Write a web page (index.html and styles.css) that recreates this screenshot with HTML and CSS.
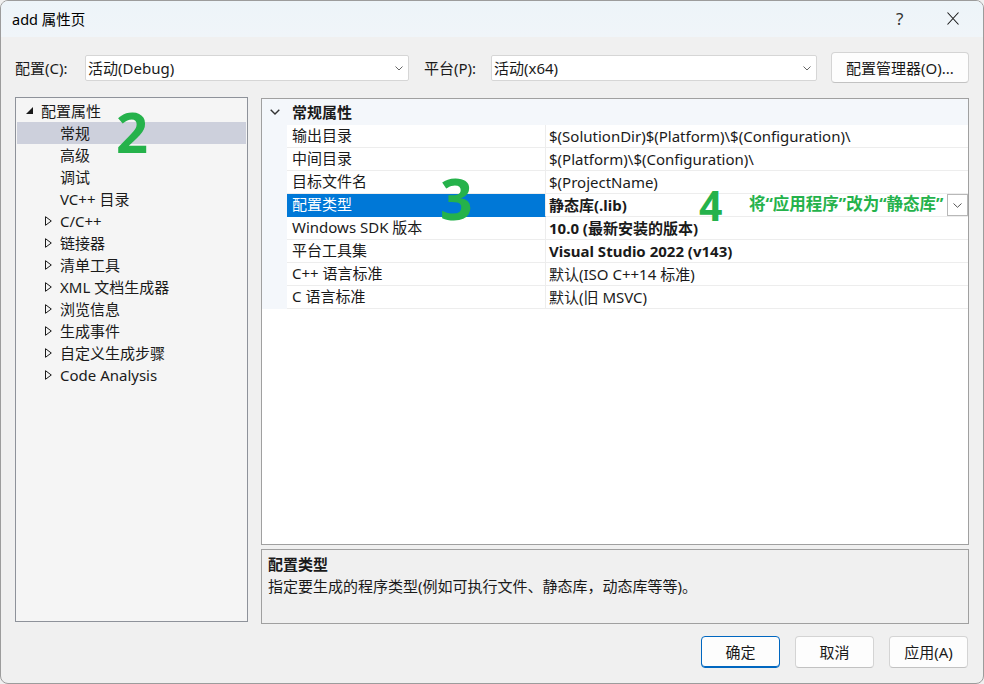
FILE: index.html
```html
<!DOCTYPE html>
<html lang="zh-CN">
<head>
    <meta charset="UTF-8">
    <meta name="viewport" content="width=device-width, initial-scale=1.0">
    <title>add 属性页</title>
    <link rel="stylesheet" href="styles.css">
</head>
<body>
    <div class="window">
        <div class="titlebar">
            <span class="title">add 属性页</span>
            <span class="help">?</span>
            <span class="close">
                <svg width="12" height="13" viewBox="0 0 12 13"><path d="M0.5 0.5L11.5 12.5M11.5 0.5L0.5 12.5" stroke="#1a1a1a" stroke-width="1.1" fill="none"/></svg>
            </span>
        </div>

        <div class="toolbar">
            <span class="field-label">配置(C):</span>
            <div class="combo combo-config">
                <span>活动(Debug)</span>
                <svg class="chev" width="8" height="5" viewBox="0 0 8 5"><path d="M0.5 0.5L4 4L7.5 0.5" stroke="#666" fill="none"/></svg>
            </div>
            <span class="field-label platform-label">平台(P):</span>
            <div class="combo combo-platform">
                <span>活动(x64)</span>
                <svg class="chev" width="8" height="5" viewBox="0 0 8 5"><path d="M0.5 0.5L4 4L7.5 0.5" stroke="#666" fill="none"/></svg>
            </div>
            <button class="btn manager">配置管理器(O)...</button>
        </div>

        <div class="main">
            <div class="tree">
                <div class="node root">
                    <span class="twisty"><svg width="7" height="7" viewBox="0 0 7 7"><path d="M7 0L7 7L0 7Z" fill="#1a1a1a"/></svg></span>
                    配置属性
                </div>
                <div class="node leaf selected">常规</div>
                <div class="node leaf">高级</div>
                <div class="node leaf">调试</div>
                <div class="node leaf">VC++ 目录</div>
                <div class="node folder"><span class="twisty"><svg width="7" height="10" viewBox="0 0 7 10"><path d="M0.5 0.7L6.3 5L0.5 9.3Z" stroke="#1a1a1a" fill="none"/></svg></span>C/C++</div>
                <div class="node folder"><span class="twisty"><svg width="7" height="10" viewBox="0 0 7 10"><path d="M0.5 0.7L6.3 5L0.5 9.3Z" stroke="#1a1a1a" fill="none"/></svg></span>链接器</div>
                <div class="node folder"><span class="twisty"><svg width="7" height="10" viewBox="0 0 7 10"><path d="M0.5 0.7L6.3 5L0.5 9.3Z" stroke="#1a1a1a" fill="none"/></svg></span>清单工具</div>
                <div class="node folder"><span class="twisty"><svg width="7" height="10" viewBox="0 0 7 10"><path d="M0.5 0.7L6.3 5L0.5 9.3Z" stroke="#1a1a1a" fill="none"/></svg></span>XML 文档生成器</div>
                <div class="node folder"><span class="twisty"><svg width="7" height="10" viewBox="0 0 7 10"><path d="M0.5 0.7L6.3 5L0.5 9.3Z" stroke="#1a1a1a" fill="none"/></svg></span>浏览信息</div>
                <div class="node folder"><span class="twisty"><svg width="7" height="10" viewBox="0 0 7 10"><path d="M0.5 0.7L6.3 5L0.5 9.3Z" stroke="#1a1a1a" fill="none"/></svg></span>生成事件</div>
                <div class="node folder"><span class="twisty"><svg width="7" height="10" viewBox="0 0 7 10"><path d="M0.5 0.7L6.3 5L0.5 9.3Z" stroke="#1a1a1a" fill="none"/></svg></span>自定义生成步骤</div>
                <div class="node folder"><span class="twisty"><svg width="7" height="10" viewBox="0 0 7 10"><path d="M0.5 0.7L6.3 5L0.5 9.3Z" stroke="#1a1a1a" fill="none"/></svg></span>Code Analysis</div>
            </div>

            <div class="right">
                <div class="grid">
                    <div class="grid-head">
                        <svg class="head-chev" width="10" height="6" viewBox="0 0 10 6"><path d="M0.7 0.7L5 5L9.3 0.7" stroke="#333" stroke-width="1.4" fill="none"/></svg>
                        <span>常规属性</span>
                    </div>
                    <div class="prop"><span class="gutter"></span><span class="name">输出目录</span><span class="value">$(SolutionDir)$(Platform)\$(Configuration)\</span></div>
                    <div class="prop"><span class="gutter"></span><span class="name">中间目录</span><span class="value">$(Platform)\$(Configuration)\</span></div>
                    <div class="prop"><span class="gutter"></span><span class="name">目标文件名</span><span class="value">$(ProjectName)</span></div>
                    <div class="prop active">
                        <span class="gutter"></span>
                        <span class="name">配置类型</span>
                        <span class="value bold">静态库(.lib)
                            <span class="drop"><svg width="9" height="5" viewBox="0 0 9 5"><path d="M0.5 0.5L4.5 4.3L8.5 0.5" stroke="#555" fill="none"/></svg></span>
                        </span>
                    </div>
                    <div class="prop"><span class="gutter"></span><span class="name">Windows SDK 版本</span><span class="value bold">10.0 (最新安装的版本)</span></div>
                    <div class="prop"><span class="gutter"></span><span class="name">平台工具集</span><span class="value bold">Visual Studio 2022 (v143)</span></div>
                    <div class="prop"><span class="gutter"></span><span class="name">C++ 语言标准</span><span class="value">默认(ISO C++14 标准)</span></div>
                    <div class="prop"><span class="gutter"></span><span class="name">C 语言标准</span><span class="value">默认(旧 MSVC)</span></div>
                    <div class="grid-rest"><span class="gutter"></span></div>
                </div>
                <div class="desc">
                    <div class="desc-title">配置类型</div>
                    <div>指定要生成的程序类型(例如可执行文件、静态库，动态库等等)。</div>
                </div>
            </div>
        </div>

        <div class="footer">
            <button class="btn default">确定</button>
            <button class="btn">取消</button>
            <button class="btn">应用(A)</button>
        </div>

        <!-- 标注 -->
        <span class="mark mark-2">2</span>
        <span class="mark mark-3">3</span>
        <span class="mark mark-4">4</span>
        <span class="note">将“应用程序”改为“静态库”</span>
    </div>
</body>
</html>
```

FILE: styles.css
```css
html, body {
    margin: 0;
    padding: 0;
    background-color: #f0f0f0;
}
body {
    font-family: "Noto Sans", "Noto Sans CJK SC", sans-serif;
    font-size: 15px;
    color: #1a1a1a;
}
.window {
    position: relative;
    width: 984px;
    height: 684px;
    box-sizing: border-box;
    border: 1px solid #9c9c9c;
    border-radius: 8px;
    background-color: #f0f0f0;
    overflow: hidden;
}
.titlebar {
    height: 36px;
    display: flex;
    align-items: center;
    padding-left: 11px;
    background: linear-gradient(#edf4f9, #f0f5f9);
}
.title {
    font-size: 14.5px;
    color: #000;
    flex: 1;
    margin-top: -2px;
}
.help {
    font-size: 17px;
    width: 20px;
    margin-right: 31px;
    margin-top: -2px;
    color: #333;
}
.close {
    width: 36px;
    display: flex;
    margin-top: -1px;
}
.toolbar {
    display: flex;
    align-items: center;
    height: 31px;
    margin-top: 15px;
    padding-left: 14px;
}
.field-label {
    width: 70px;
    line-height: 20px;
}
.platform-label {
    width: 67px;
    margin-left: 15px;
}
.combo {
    height: 26px;
    box-sizing: border-box;
    border: 1px solid #d6d6d6;
    border-radius: 2px;
    background-color: #fff;
    display: flex;
    align-items: center;
    justify-content: space-between;
    padding: 0 5px 0 2px;
    line-height: 20px;
}
.combo-config {
    width: 324px;
}
.combo-platform {
    width: 326px;
}
.chev {
    margin-top: 1px;
}
.btn {
    font-family: inherit;
    font-size: 15px;
    color: #1a1a1a;
    background-color: #fdfdfd;
    border: 1px solid #d4d4d4;
    border-bottom-color: #c2c2c2;
    border-radius: 4px;
    height: 32px;
    width: 79px;
    padding: 0;
    line-height: 20px;
}
.manager {
    width: 138px;
    height: 31px;
    margin-left: 14px;
}
.main {
    display: flex;
    margin-top: 14px;
    padding-left: 14px;
}
.tree {
    width: 233px;
    height: 525px;
    box-sizing: border-box;
    border: 1px solid #8e929a;
    background-color: #f5f5f5;
    padding-top: 2px;
}
.node {
    height: 22px;
    display: flex;
    align-items: center;
    line-height: 20px;
    white-space: nowrap;
}
.twisty {
    width: 15px;
    display: flex;
    align-items: center;
}
.root {
    padding-left: 10px;
}
.root .twisty svg {
    margin-top: -1px;
}
.leaf {
    padding-left: 43px;
    margin: 0 1px;
}
.folder {
    padding-left: 29px;
}
.selected {
    background-color: #cdd0dc;
}
.right {
    margin-left: 13px;
    margin-top: 1px;
}
.grid {
    width: 708px;
    height: 447px;
    box-sizing: border-box;
    border: 1px solid #a0a0a0;
    background-color: #fff;
    display: flex;
    flex-direction: column;
}
.grid-head {
    height: 26px;
    display: flex;
    align-items: center;
    background-color: #f4f7fb;
    font-weight: bold;
    line-height: 20px;
}
.head-chev {
    margin: 0 12px 0 8px;
}
.prop {
    display: grid;
    grid-template-columns: 25px 259px 1fr;
    height: 23px;
    line-height: 20px;
}
.gutter {
    background-color: #f4f7fb;
}
.name {
    padding-left: 5px;
    border-right: 1px solid #ededed;
    border-bottom: 1px solid #ededed;
    white-space: nowrap;
}
.value {
    padding-left: 3px;
    border-bottom: 1px solid #ededed;
    white-space: nowrap;
    display: flex;
    align-items: center;
}
.bold {
    font-weight: bold;
}
.active .name {
    background-color: #0078d7;
    color: #fff;
    border-bottom-color: #0078d7;
}
.drop {
    margin-left: auto;
    margin-right: 0;
    width: 21px;
    height: 22px;
    box-sizing: border-box;
    border: 1px solid #b8b8b8;
    background-color: #fff;
    display: flex;
    align-items: center;
    justify-content: center;
}
.grid-rest {
    flex: 1;
    display: grid;
    grid-template-columns: 25px 1fr;
}
.grid-rest .gutter {
    background-color: #fff;
}
.desc {
    width: 708px;
    height: 75px;
    box-sizing: border-box;
    margin-top: 4px;
    border: 1px solid #a0a0a0;
    background-color: #f0f0f0;
    padding: 3px 6px;
    line-height: 22px;
}
.desc-title {
    font-weight: bold;
}
.footer {
    display: flex;
    justify-content: flex-end;
    gap: 15px;
    margin-top: 12px;
    padding-right: 15px;
}
.default {
    border-color: #0067c0;
    box-shadow: inset 0 -1px 0 #0067c0;
}
.mark {
    position: absolute;
    color: #25b24b;
    font-weight: bold;
    line-height: 1;
}
.mark-2 {
    font-size: 56px;
    left: 115px;
    top: 102px;
}
.mark-3 {
    font-size: 57px;
    left: 439px;
    top: 169px;
}
.mark-4 {
    font-size: 41px;
    left: 698px;
    top: 184px;
}
.note {
    position: absolute;
    left: 748px;
    top: 192px;
    color: #25b24b;
    font-weight: bold;
    font-size: 16.5px;
    line-height: 22px;
}
```
